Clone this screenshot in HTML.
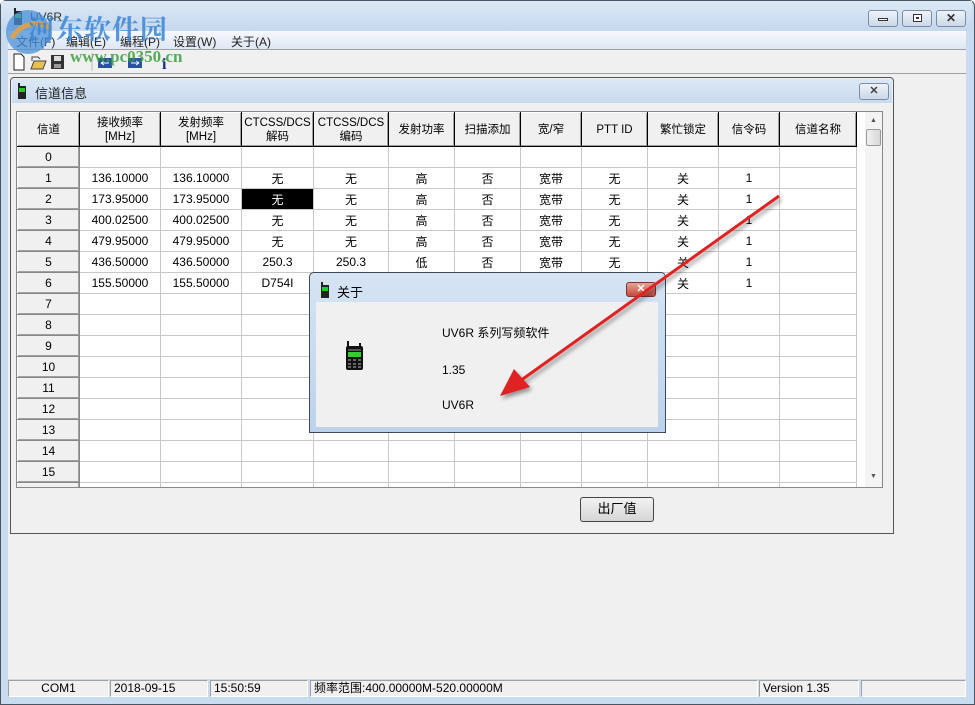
<!DOCTYPE html>
<html><head><meta charset="utf-8"><style>
*{box-sizing:border-box;margin:0;padding:0}
body{width:975px;height:705px;overflow:hidden;background:#fff;font-family:"Liberation Sans","Noto Sans CJK SC",sans-serif;font-size:12px;color:#000;position:relative}
.abs{position:absolute}
#win{left:0;top:0;width:975px;height:705px;background:#c9dbef;border:1px solid #4a5563;border-radius:6px 6px 0 0}
#title{left:1px;top:1px;width:971px;height:30px;background:linear-gradient(#dce8f5,#c5d8ee)}
#menu{left:8px;top:31px;width:958px;height:18px;background:linear-gradient(#f6f9fd,#dde7f4);font-size:12px;color:#222}
#tool{left:8px;top:49px;width:958px;height:24px;background:#f0f0f0;border-top:1px solid #a0a0a0}
#mdi{left:8px;top:73px;width:958px;height:606px;background:#f0f0f0;border-top:1px solid #a0a0a0}
#child{left:10px;top:77px;width:884px;height:457px;background:#f0f0f0;border:1px solid #555;border-radius:4px 4px 0 0}
#ctitle{left:1px;top:1px;width:880px;height:24px;background:linear-gradient(#dce8f5,#c9daee)}
table{border-collapse:collapse;table-layout:fixed}
td{border:1px solid #c8c8c8;height:21px;text-align:center;font-size:12px;white-space:nowrap;overflow:hidden}
th{font-weight:normal;font-size:11.5px;border:1px solid #000;border-top-color:#fff;border-left-color:#fff;background:#f0f0f0;line-height:14px;height:34px;box-shadow:inset -1px -1px 0 #a0a0a0;white-space:nowrap;overflow:hidden}
td.rh{background:#f0f0f0;border:1px solid #888;border-top-color:#fff;border-left-color:#fff;box-shadow:inset -1px -1px 0 #a0a0a0}
.btn{border:1px solid #707070;border-radius:3px;background:linear-gradient(#f2f2f2,#d6d6d6)}
.wb{border:1px solid #7c8ca3;border-radius:3px;background:linear-gradient(#eef3f9,#cbd8e8);text-align:center}
.sb{top:680px;height:17px;border:1px solid #a0a0a0;border-right-color:#fff;border-bottom-color:#fff;font-size:12px;line-height:15px;padding-left:3px;background:#f0f0f0}
</style></head><body>
<div id="win" class="abs"></div>
<div id="title" class="abs"></div>
<svg class="abs" style="left:12px;top:8px" width="12" height="18"><rect x="2" y="3" width="8" height="14" fill="#222"/><rect x="2" y="0" width="2" height="4" fill="#222"/><rect x="3" y="6" width="6" height="4" fill="#3c3"/></svg>
<div class="abs" style="left:30px;top:10px;font-size:12px;color:#333">UV6R</div>
<div class="abs wb" style="left:868px;top:10px;width:30px;height:17px"><div style="margin:7px auto 0;width:10px;height:3px;border:1px solid #333;background:#fff"></div></div>
<div class="abs wb" style="left:902px;top:10px;width:30px;height:17px"><div style="margin:3px auto 0;width:9px;height:8px;border:1px solid #333;background:#fff;box-shadow:inset 0 0 0 2px #fff,inset 0 0 0 3px #333"></div></div>
<div class="abs wb" style="left:936px;top:10px;width:30px;height:17px;font-size:12px;font-weight:bold;line-height:14px;color:#333">✕</div>
<div id="menu" class="abs"><span class="abs" style="left:8px;top:2px">文件(F)</span><span class="abs" style="left:58px;top:2px">编辑(E)</span><span class="abs" style="left:112px;top:2px">编程(P)</span><span class="abs" style="left:165px;top:2px">设置(W)</span><span class="abs" style="left:223px;top:2px">关于(A)</span></div>
<div id="tool" class="abs">
<svg class="abs" style="left:4px;top:3px" width="160" height="18">
<path d="M2 1h7l3 3v13H2z" fill="#fff" stroke="#222"/>
<path d="M22 8h12l-3 8H19z" fill="#e8c050" stroke="#444"/><path d="M20 8v-4h6l2 2" fill="none" stroke="#444"/>
<rect x="39" y="2" width="13" height="14" fill="#333"/><rect x="42" y="3" width="7" height="5" fill="#ddd"/><rect x="42" y="11" width="7" height="4" fill="#999"/>
<line x1="80" y1="0" x2="80" y2="18" stroke="#bbb"/>
<rect x="86" y="5" width="14" height="10" fill="#2850a8"/><path d="M89 10h8M89 10l3-2M89 10l3 2" stroke="#fff"/>
<rect x="116" y="5" width="14" height="10" fill="#2850a8"/><path d="M119 10h8M127 10l-3-2M127 10l-3 2" stroke="#fff"/>
<text x="150" y="16" font-family="Liberation Serif" font-weight="bold" font-size="16" fill="#1a2a8a">i</text>
</svg></div>
<div id="mdi" class="abs"></div>
<svg class="abs" style="left:2px;top:8px" width="70" height="48"><circle cx="26" cy="24" r="22" fill="#4a90d8" opacity="0.75"/><path d="M10 30c8-14 24-18 38-10" stroke="#f0a030" stroke-width="5" fill="none" opacity="0.8"/></svg>
<div class="abs" style="left:28px;top:8px;font-family:'Noto Serif CJK SC',serif;font-size:27px;font-weight:bold;color:#3a86d6;opacity:.85;letter-spacing:1px">河东软件园</div>
<div class="abs" style="left:70px;top:47px;font-family:'Liberation Serif',serif;font-size:17px;font-weight:bold;color:#3aa040;opacity:.85">www.pc0350.cn</div>

<div id="child" class="abs">
<div id="ctitle" class="abs"></div>
<svg class="abs" style="left:6px;top:5px" width="10" height="16"><rect x="1" y="3" width="8" height="13" fill="#222"/><rect x="1" y="0" width="2" height="4" fill="#222"/><rect x="2" y="5" width="6" height="4" fill="#2c2"/></svg>
<div class="abs" style="left:24px;top:5px;font-size:13px;color:#222">信道信息</div>
<div class="abs wb" style="left:848px;top:5px;width:30px;height:17px;font-size:11px;font-weight:bold;line-height:14px;color:#444">✕</div>
<div class="abs" style="left:5px;top:33px;width:867px;height:377px;background:#fff;border:1px solid #888;overflow:hidden">
<table style="width:839px">
<colgroup><col style="width:62px"><col style="width:81px"><col style="width:81px"><col style="width:72px"><col style="width:75px"><col style="width:66px"><col style="width:66px"><col style="width:61px"><col style="width:66px"><col style="width:71px"><col style="width:61px"><col style="width:77px"></colgroup>
<tr><th>信道</th><th>接收频率<br>[MHz]</th><th>发射频率<br>[MHz]</th><th>CTCSS/DCS<br>解码</th><th>CTCSS/DCS<br>编码</th><th>发射功率</th><th>扫描添加</th><th>宽/窄</th><th>PTT ID</th><th>繁忙锁定</th><th>信令码</th><th>信道名称</th></tr>
<tr><td class="rh">0</td><td></td><td></td><td></td><td></td><td></td><td></td><td></td><td></td><td></td><td></td><td></td></tr>
<tr><td class="rh">1</td><td>136.10000</td><td>136.10000</td><td>无</td><td>无</td><td>高</td><td>否</td><td>宽带</td><td>无</td><td>关</td><td>1</td><td></td></tr>
<tr><td class="rh">2</td><td>173.95000</td><td>173.95000</td><td style="background:#000;color:#fff">无</td><td>无</td><td>高</td><td>否</td><td>宽带</td><td>无</td><td>关</td><td>1</td><td></td></tr>
<tr><td class="rh">3</td><td>400.02500</td><td>400.02500</td><td>无</td><td>无</td><td>高</td><td>否</td><td>宽带</td><td>无</td><td>关</td><td>1</td><td></td></tr>
<tr><td class="rh">4</td><td>479.95000</td><td>479.95000</td><td>无</td><td>无</td><td>高</td><td>否</td><td>宽带</td><td>无</td><td>关</td><td>1</td><td></td></tr>
<tr><td class="rh">5</td><td>436.50000</td><td>436.50000</td><td>250.3</td><td>250.3</td><td>低</td><td>否</td><td>宽带</td><td>无</td><td>关</td><td>1</td><td></td></tr>
<tr><td class="rh">6</td><td>155.50000</td><td>155.50000</td><td>D754I</td><td></td><td></td><td></td><td></td><td></td><td>关</td><td>1</td><td></td></tr>
<tr><td class="rh">7</td><td></td><td></td><td></td><td></td><td></td><td></td><td></td><td></td><td></td><td></td><td></td></tr>
<tr><td class="rh">8</td><td></td><td></td><td></td><td></td><td></td><td></td><td></td><td></td><td></td><td></td><td></td></tr>
<tr><td class="rh">9</td><td></td><td></td><td></td><td></td><td></td><td></td><td></td><td></td><td></td><td></td><td></td></tr>
<tr><td class="rh">10</td><td></td><td></td><td></td><td></td><td></td><td></td><td></td><td></td><td></td><td></td><td></td></tr>
<tr><td class="rh">11</td><td></td><td></td><td></td><td></td><td></td><td></td><td></td><td></td><td></td><td></td><td></td></tr>
<tr><td class="rh">12</td><td></td><td></td><td></td><td></td><td></td><td></td><td></td><td></td><td></td><td></td><td></td></tr>
<tr><td class="rh">13</td><td></td><td></td><td></td><td></td><td></td><td></td><td></td><td></td><td></td><td></td><td></td></tr>
<tr><td class="rh">14</td><td></td><td></td><td></td><td></td><td></td><td></td><td></td><td></td><td></td><td></td><td></td></tr>
<tr><td class="rh">15</td><td></td><td></td><td></td><td></td><td></td><td></td><td></td><td></td><td></td><td></td><td></td></tr>
<tr><td class="rh">16</td><td></td><td></td><td></td><td></td><td></td><td></td><td></td><td></td><td></td><td></td><td></td></tr>
</table>
<div class="abs" style="left:848px;top:0;width:17px;height:375px;background:#f4f4f4">
<div class="abs" style="left:5px;top:5px;font-size:7px;color:#555">▲</div>
<div class="abs" style="left:1px;top:17px;width:15px;height:17px;border:1px solid #999;border-radius:2px;background:linear-gradient(90deg,#f0f0f0,#d8d8d8)"></div>
<div class="abs" style="left:5px;top:361px;font-size:7px;color:#555">▼</div>
</div>
</div>
<div class="abs btn" style="left:569px;top:419px;width:74px;height:25px;text-align:center;line-height:22px;font-size:13px;border-color:#444">出厂值</div>
</div>

<div class="abs sb" style="left:8px;width:101px;text-align:center;padding:0">COM1</div>
<div class="abs sb" style="left:110px;width:98px">2018-09-15</div>
<div class="abs sb" style="left:210px;width:98px">15:50:59</div>
<div class="abs sb" style="left:310px;width:448px">频率范围:400.00000M-520.00000M</div>
<div class="abs sb" style="left:759px;width:100px">Version 1.35</div>
<div class="abs sb" style="left:861px;width:105px"></div>

<div class="abs" style="left:309px;top:272px;width:357px;height:161px;background:linear-gradient(#d6e4f4,#bcd2ec);border:1px solid #3c4a5c;border-radius:5px 5px 0 0">
<svg class="abs" style="left:10px;top:9px" width="10" height="16"><rect x="1" y="3" width="8" height="13" fill="#222"/><rect x="1" y="0" width="2" height="4" fill="#222"/><rect x="2" y="5" width="6" height="4" fill="#2c2"/></svg>
<div class="abs" style="left:27px;top:9px;font-size:13px">关于</div>
<div class="abs" style="left:316px;top:9px;width:30px;height:15px;border:1px solid #7a3530;border-radius:3px;background:linear-gradient(#e8a096,#c64a3c);color:#fff;text-align:center;font-size:11px;font-weight:bold;line-height:13px">✕</div>
<div class="abs" style="left:6px;top:29px;width:342px;height:125px;background:#f0f0f0">
<svg class="abs" style="left:29px;top:37px" width="20" height="32"><rect x="2" y="2" width="2" height="6" fill="#111"/><rect x="14" y="4" width="2" height="4" fill="#111"/><rect x="1" y="7" width="17" height="24" rx="2" fill="#111"/><rect x="3" y="10" width="13" height="2" fill="#555"/><rect x="3" y="13" width="13" height="5" fill="#3c3"/><g fill="#666"><rect x="3" y="20" width="3" height="2"/><rect x="8" y="20" width="3" height="2"/><rect x="13" y="20" width="3" height="2"/><rect x="3" y="24" width="3" height="2"/><rect x="8" y="24" width="3" height="2"/><rect x="13" y="24" width="3" height="2"/><rect x="3" y="27" width="3" height="2"/><rect x="8" y="27" width="3" height="2"/><rect x="13" y="27" width="3" height="2"/></g></svg>
<div class="abs" style="left:126px;top:22px;font-size:12px">UV6R 系列写频软件</div>
<div class="abs" style="left:126px;top:61px;font-size:12px">1.35</div>
<div class="abs" style="left:126px;top:96px;font-size:12px">UV6R</div>
</div>
</div>

<svg class="abs" style="left:0;top:0" width="975" height="705">
<defs><filter id="sh"><feDropShadow dx="2" dy="3" stdDeviation="2" flood-opacity="0.4"/></filter></defs>
<g filter="url(#sh)"><line x1="779" y1="196" x2="520" y2="381" stroke="#e02020" stroke-width="3"/><path d="M500 396L514 369L530 387Z" fill="#e02020"/></g>
</svg>
</body></html>
